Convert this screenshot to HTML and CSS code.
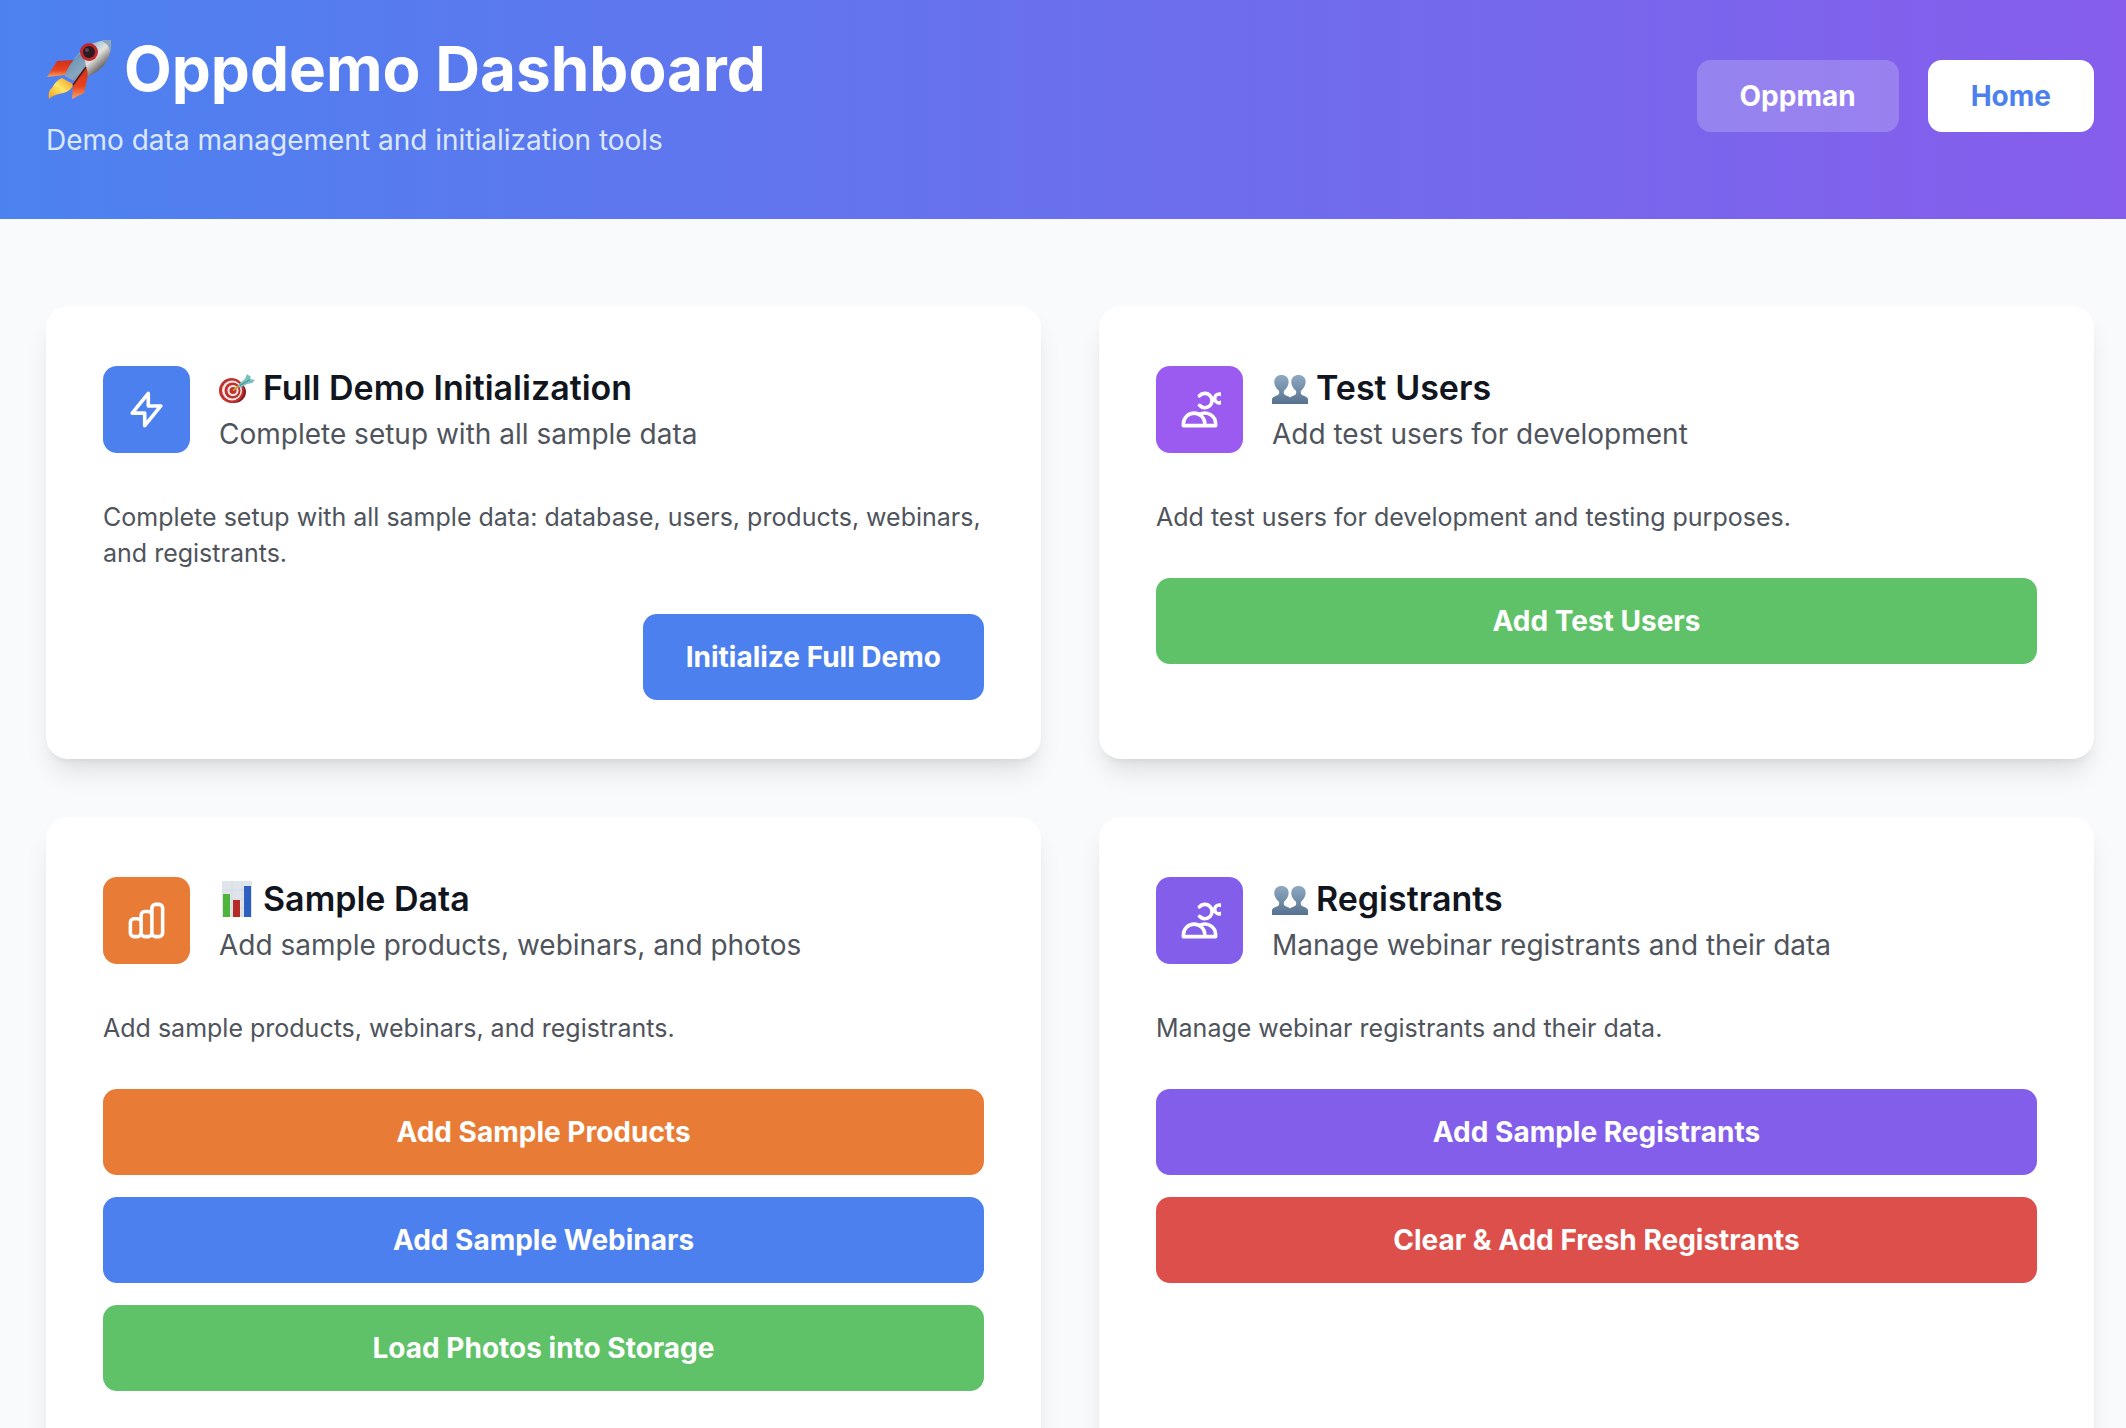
FILE: index.html
```html
<!DOCTYPE html>
<html lang="en">
<head>
<meta charset="utf-8">
<meta name="viewport" content="width=device-width, initial-scale=1">
<title>Oppdemo Dashboard</title>
<link rel="stylesheet" href="styles.css">
</head>
<body>
<svg class="defs" aria-hidden="true">
  <defs>
    <linearGradient id="bust" x1="0" y1="0" x2="0" y2="1">
      <stop offset="0" stop-color="#8fa9c2"/><stop offset="1" stop-color="#56728f"/>
    </linearGradient>
    <linearGradient id="hull" gradientUnits="userSpaceOnUse" x1="30" y1="14" x2="50" y2="36">
      <stop offset="0" stop-color="#4f7c9c"/><stop offset="0.25" stop-color="#a9c3d3"/><stop offset="0.6" stop-color="#e2e2df"/><stop offset="1" stop-color="#6f6c68"/>
    </linearGradient>
    <linearGradient id="flame" x1="1" y1="0" x2="0" y2="1">
      <stop offset="0" stop-color="#f0921b"/><stop offset="0.5" stop-color="#ffe766"/><stop offset="1" stop-color="#f09a20"/>
    </linearGradient>
    <linearGradient id="fin" x1="0" y1="0" x2="0" y2="1">
      <stop offset="0" stop-color="#cf2f1b"/><stop offset="0.6" stop-color="#e8431f"/><stop offset="1" stop-color="#f3a565"/>
    </linearGradient>
    <symbol id="busts" viewBox="0 0 36 36">
      <path fill="url(#bust)" d="M0 34v-5c1-3 5-3 6.500-4.500.9-1 .9-2.500.3-4C0 15 1 5 9.500 5S19 15 12.200 20.500c-.6 1.500-.6 3 .3 4 1.200 1.200 4.300 1.500 5.500 3 1.200-1.500 4.300-1.800 5.500-3 .9-1 .9-2.500.3-4C17 15 18 5 26.500 5S36 15 29.200 20.500c-.6 1.500-.6 3 .3 4 1.500 1.500 5.500 1.500 6.500 4.500v5z"/>
    </symbol>
    <symbol id="users" viewBox="0 0 24 24">
      <path d="M12 4.354a4 4 0 110 5.292M15 21H3v-1a6 6 0 0112 0v1zm0 0h6v-1a6 6 0 00-9-5.197m13.5-9a2.500 2.500 0 11-5 0 2.500 2.500 0 015 0z"/>
    </symbol>
  </defs>
</svg>

<header class="header">
  <div>
    <h1 class="title">
      <svg class="rocket" viewBox="0 0 66 66" aria-hidden="true">
        <path fill="url(#fin)" d="M11 25l17-1-9 15-18 2z"/>
        <path fill="url(#flame)" d="M16 42l11 6c-1 5-5 8-10 9-4 1-10 2-14 6-1-5 0-9 3-11 2-4 5-8 10-10z"/>
        <path fill="url(#hull)" d="M65 4c1 17-6 27-18 34-5 3-11 5-18 7l-10-5c2-6 4-10 8-15C35 12 47 4 65 4z"/>
        <path fill="#4d7ea8" opacity=".6" d="M27 25l6-7 5 3 2 9-6 12-5 3-10-5c2-6 4-10 8-15z"/>
        <path fill="url(#fin)" d="M40 31c2 4 2 8 1 13l-3 13-12 6 1-14c3-6 8-13 13-18z"/>
        <path stroke="#4a1c1c" stroke-width="1.500" d="M40 31L27 49"/>
        <path fill="#5c86a0" d="M65 4c0 4 0 7-1 10-1-4-4-7-8-9 3-1 6-1 9-1z" opacity=".6"/>
        <circle cx="43" cy="16" r="9" fill="#c3272b"/>
        <circle cx="43" cy="16" r="6" fill="#2a1b22"/>
        <circle cx="41" cy="14" r="2" fill="#5a4650"/>
      </svg>
      <span>Oppdemo Dashboard</span>
    </h1>
    <p class="tagline">Demo data management and initialization tools</p>
  </div>
  <nav class="nav">
    <a class="nav-link nav-link-ghost" href="#">Oppman</a>
    <a class="nav-link nav-link-solid" href="#">Home</a>
  </nav>
</header>

<main class="grid">
  <section class="card">
    <div class="head">
      <div class="badge blue"><svg class="icon" viewBox="0 0 24 24" aria-hidden="true"><path d="M13 10V3L4 14h7v7l9-11h-7z"/></svg></div>
      <div>
        <h2 class="name">
          <svg class="emoji" viewBox="0 0 36 36" aria-hidden="true">
            <ellipse cx="15" cy="22" rx="12" ry="11" fill="#7d1b1f"/>
            <circle cx="12.500" cy="20.500" r="12.500" fill="#c2302f"/>
            <circle cx="13" cy="20.500" r="10" fill="#f3ece6"/>
            <circle cx="13.500" cy="20.500" r="8" fill="#c2302f"/>
            <circle cx="14" cy="20.500" r="5.500" fill="#f3ece6"/>
            <circle cx="14" cy="20.500" r="3.500" fill="#c2302f"/>
            <path d="M14 20.500l8-6" stroke="#c79a3a" stroke-width="2"/>
            <path fill="#79c0bf" d="M19 15l7-6 2-5 4 3-1 2 5 1-3 3-5 1-7 4z"/>
            <path stroke="#3f8c8e" d="M21 15.500l10-6"/>
          </svg>
          <span>Full Demo Initialization</span>
        </h2>
        <p class="sub">Complete setup with all sample data</p>
      </div>
    </div>
    <p class="desc">Complete setup with all sample data: database, users, products, webinars, and registrants.</p>
    <div class="actions actions-end">
      <button class="btn blue" type="button">Initialize Full Demo</button>
    </div>
  </section>

  <section class="card">
    <div class="head">
      <div class="badge purple"><svg class="icon" aria-hidden="true"><use href="#users"/></svg></div>
      <div>
        <h2 class="name"><svg class="emoji" aria-hidden="true"><use href="#busts"/></svg><span>Test Users</span></h2>
        <p class="sub">Add test users for development</p>
      </div>
    </div>
    <p class="desc">Add test users for development and testing purposes.</p>
    <div class="actions">
      <button class="btn green" type="button">Add Test Users</button>
    </div>
  </section>

  <section class="card">
    <div class="head">
      <div class="badge orange"><svg class="icon" viewBox="0 0 24 24" aria-hidden="true"><path d="M9 19v-6a2 2 0 00-2-2H5a2 2 0 00-2 2v6a2 2 0 002 2h2a2 2 0 002-2zm0 0V9a2 2 0 012-2h2a2 2 0 012 2v10m-6 0a2 2 0 002 2h2a2 2 0 002-2m0 0V5a2 2 0 012-2h2a2 2 0 012 2v14a2 2 0 01-2 2h-2a2 2 0 01-2-2z"/></svg></div>
      <div>
        <h2 class="name">
          <svg class="emoji" viewBox="0 0 36 36" aria-hidden="true">
            <path fill="#e0e5ec" d="M3 0h30v36H3z"/>
            <path stroke="#d3dae3" d="M3 9h30M3 18h30M3 27h30M13 0v36M23 0v36"/>
            <path fill="#4fb53a" d="M4 13h7v23H4z"/>
            <path fill="#b52a26" d="M14 19h7v17h-7z"/>
            <path fill="#2c5fc0" d="M25 5h7v31h-7z"/>
          </svg>
          <span>Sample Data</span>
        </h2>
        <p class="sub">Add sample products, webinars, and photos</p>
      </div>
    </div>
    <p class="desc">Add sample products, webinars, and registrants.</p>
    <div class="actions">
      <button class="btn orange" type="button">Add Sample Products</button>
      <button class="btn blue" type="button">Add Sample Webinars</button>
      <button class="btn green" type="button">Load Photos into Storage</button>
    </div>
  </section>

  <section class="card">
    <div class="head">
      <div class="badge violet"><svg class="icon" aria-hidden="true"><use href="#users"/></svg></div>
      <div>
        <h2 class="name"><svg class="emoji" aria-hidden="true"><use href="#busts"/></svg><span>Registrants</span></h2>
        <p class="sub">Manage webinar registrants and their data</p>
      </div>
    </div>
    <p class="desc">Manage webinar registrants and their data.</p>
    <div class="actions">
      <button class="btn violet" type="button">Add Sample Registrants</button>
      <button class="btn red" type="button">Clear &amp; Add Fresh Registrants</button>
    </div>
  </section>
</main>
</body>
</html>
```
FILE: styles.css
```css
* {
  box-sizing: border-box;
  margin: 0;
  padding: 0;
}

body {
  background: #f9fafb;
  color: #11151d;
  font-family: Inter, "Liberation Sans", sans-serif;
  font-size: 28px;
  line-height: 43px;
}

.defs {
  display: block;
  width: 0;
  height: 0;
}

.header {
  display: flex;
  justify-content: space-between;
  align-items: flex-start;
  padding: 33px 32px 57px 46px;
  background: linear-gradient(90deg, #4c82ef, #865dec);
  color: #fff;
}

.title {
  display: flex;
  align-items: center;
  gap: 12px;
  font-size: 62px;
  font-weight: 700;
  line-height: 72px;
}

.rocket {
  width: 66px;
  height: 66px;
}

.tagline {
  margin-top: 14px;
  color: #dbe8fd;
}

.nav {
  display: flex;
  gap: 29px;
  padding-top: 27px;
}

.nav-link {
  padding: 14px 43px;
  border-radius: 14px;
  font-weight: 700;
  line-height: 44px;
  text-decoration: none;
}

.nav-link-ghost {
  background: rgba(255, 255, 255, 0.2);
  color: #fff;
}

.nav-link-solid {
  background: #fff;
  color: #4c80ee;
}

.grid {
  display: grid;
  grid-template-columns: repeat(2, minmax(0, 1fr));
  gap: 58px;
  padding: 87px 32px 87px 46px;
}

.card {
  padding: 57px 57px 59px;
  border-radius: 22px;
  background: #fff;
  box-shadow: 0 18px 27px -5px rgba(0, 0, 0, 0.1), 0 7px 11px -7px rgba(0, 0, 0, 0.1);
}

.head {
  display: flex;
  align-items: center;
  gap: 29px;
  margin-bottom: 43px;
}

.badge {
  display: grid;
  flex: none;
  place-items: center;
  width: 87px;
  height: 87px;
  border-radius: 14px;
}

.icon {
  width: 43px;
  height: 43px;
  fill: none;
  stroke: #fff;
  stroke-width: 2;
  stroke-linecap: round;
  stroke-linejoin: round;
}

.name {
  display: flex;
  align-items: center;
  gap: 8px;
  font-size: 34px;
  font-weight: 600;
  line-height: 50px;
}

.emoji {
  width: 36px;
  height: 36px;
}

.sub {
  color: #4f545c;
}

.desc {
  margin-bottom: 43px;
  color: #4f545c;
  font-size: 25px;
  line-height: 36px;
}

.actions {
  display: grid;
  gap: 22px;
}

.actions-end {
  justify-content: end;
}

.btn {
  padding: 21px 43px;
  border: 0;
  border-radius: 14px;
  color: #fff;
  font: inherit;
  font-weight: 700;
  line-height: 44px;
  cursor: pointer;
}

.blue { background: #4c80ee; }
.purple { background: #9c5bf0; }
.green { background: #5fc269; }
.orange { background: #e87b35; }
.violet { background: #825eeb; }
.red { background: #dc4f4a; }
```
